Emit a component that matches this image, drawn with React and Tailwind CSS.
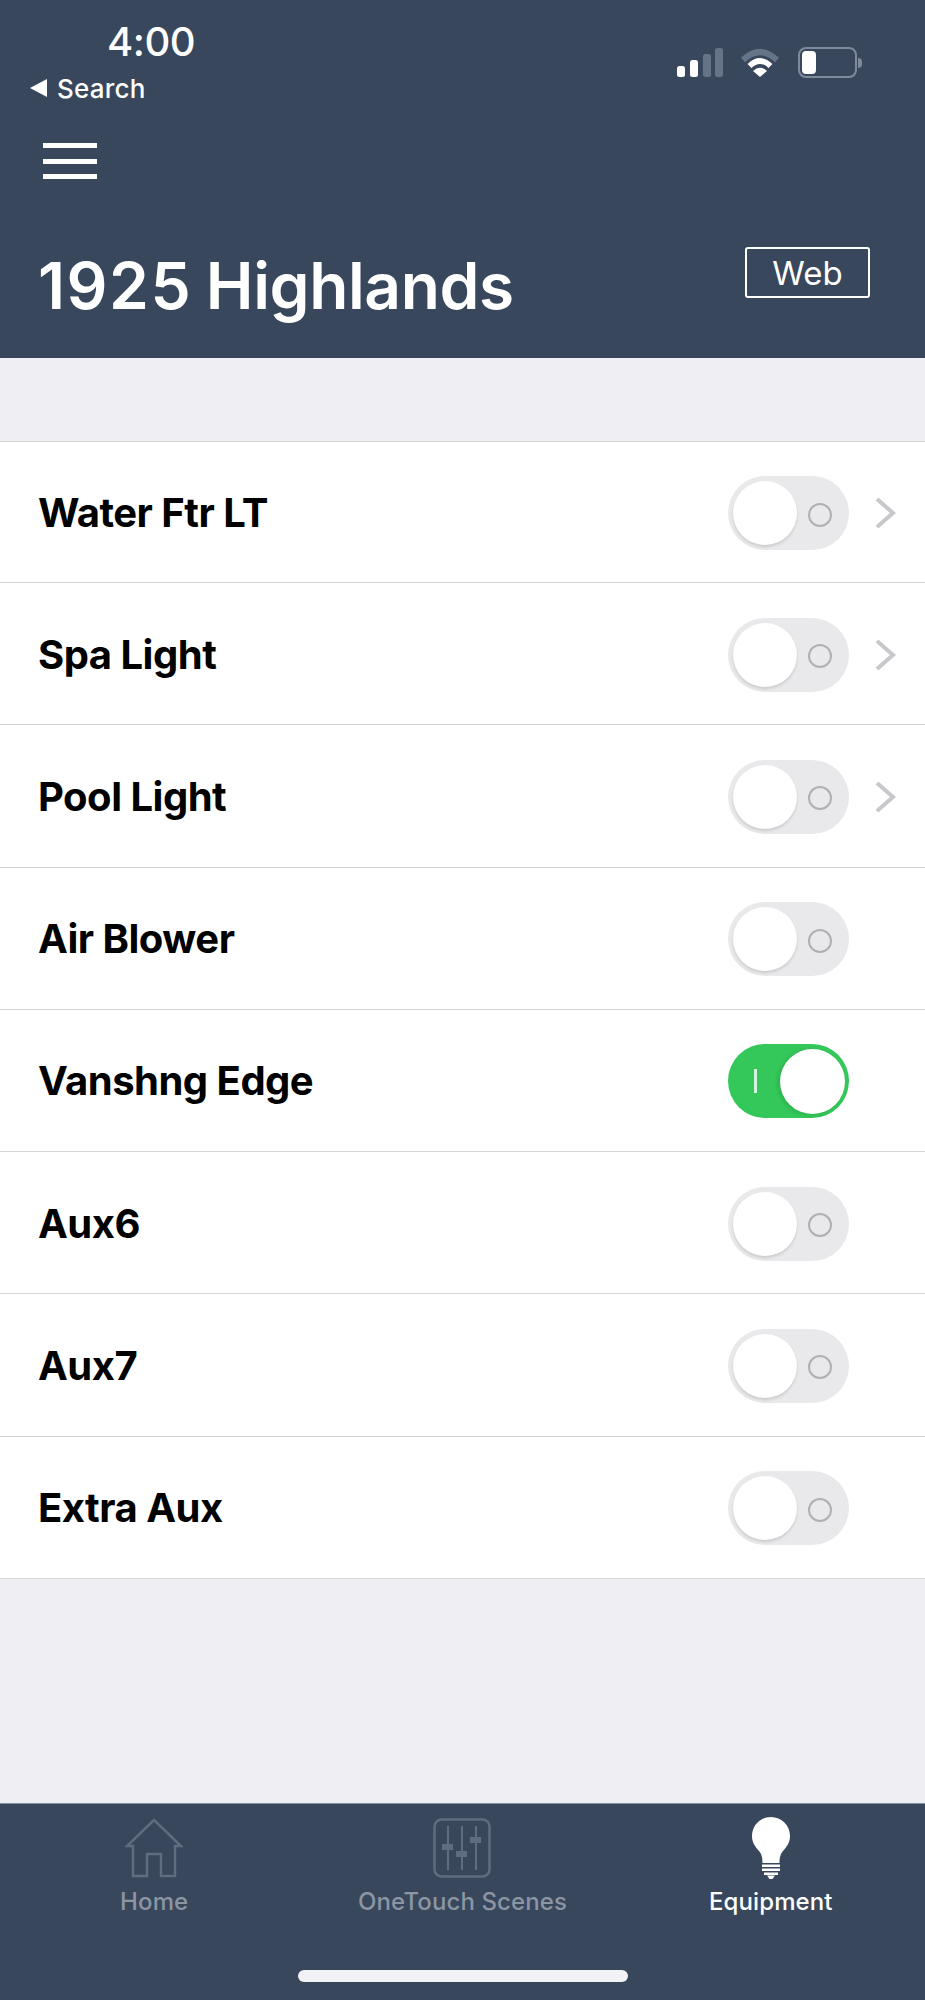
import React from "react";

const rows = [
  { name: "Water Ftr LT", more: true },
  { name: "Spa Light", more: true },
  { name: "Pool Light", more: true },
  { name: "Air Blower" },
  { name: "Vanshng Edge", on: true },
  { name: "Aux6" },
  { name: "Aux7" },
  { name: "Extra Aux" },
];

const font = "font-['Inter',sans-serif]";

const StatusIcons = () => (
  <div className="flex items-center self-start mt-[29px]">
    {/* signal */}
    <svg width="46" height="30" viewBox="0 0 46 30">
      <rect x="0" y="18" width="8" height="11" rx="2.5" fill="#fff" />
      <rect x="13" y="12" width="8" height="17" rx="2.5" fill="#fff" />
      <rect x="26" y="6" width="8" height="23" rx="2.5" fill="#667487" />
      <rect x="38" y="0" width="8" height="29" rx="2.5" fill="#667487" />
    </svg>
    {/* wifi */}
    <svg width="40" height="30" viewBox="0 0 40 30" className="ml-[17px]">
      <path d="M3 12 Q20 -4 37 12" fill="none" stroke="#667487" strokeWidth="6" />
      <path d="M9.5 18 Q20 8 30.5 18" fill="none" stroke="#fff" strokeWidth="5.5" />
      <path d="M20 29 L13 23 Q20 16.5 27 23 Z" fill="#fff" />
    </svg>
    {/* battery */}
    <div className="ml-[18px] flex items-center">
      <div className="w-[59px] h-[31px] rounded-[8px] border-[2.5px] border-[#7f8b9b] p-[2px]">
        <div className="w-[14px] h-full rounded-[4px] bg-white" />
      </div>
      <div className="ml-[1px] w-[4px] h-[10px] rounded-r-full bg-[#7f8b9b]" />
    </div>
  </div>
);

const Toggle = ({ on }) =>
  on ? (
    <div className="w-[121px] h-[74px] rounded-full bg-[#34c759] flex items-center justify-between pl-[26px] pr-[4px]">
      <div className="w-[2.5px] h-[24px] bg-[#d5f2dc]" />
      <div className="w-[65px] h-[65px] rounded-full bg-white shadow-[-2px_1px_4px_rgba(0,0,0,0.12)]" />
    </div>
  ) : (
    <div className="w-[121px] h-[74px] rounded-full bg-[#e9e9eb] flex items-center justify-between pl-[5px] pr-[17px]">
      <div className="w-[64px] h-[64px] rounded-full bg-white shadow-[0_2px_3px_rgba(0,0,0,0.13)]" />
      <div className="mt-[3px] w-[24px] h-[24px] rounded-full border-[2.5px] border-[#b0b0b2]" />
    </div>
  );

const Chevron = () => (
  <svg width="22" height="34" viewBox="0 0 22 34" className="ml-[25px]">
    <path d="M3 3 L19 17 L3 31" fill="none" stroke="#c8c8cc" strokeWidth="4" />
  </svg>
);

const HomeIcon = () => (
  <svg width="58" height="60" viewBox="0 0 58 60" fill="none" stroke="#5f6d80" strokeWidth="2.5">
    <path d="M29 2 L56 28 L50 28 L50 58 L36 58 L36 36 L22 36 L22 58 L8 58 L8 28 L2 28 Z" />
  </svg>
);

const SlidersIcon = () => (
  <svg width="58" height="60" viewBox="0 0 58 60" fill="none" stroke="#5f6d80" strokeWidth="2.5">
    <rect x="1.5" y="1.5" width="55" height="57" rx="7" />
    <path d="M15 8 V52 M29 8 V52 M43 8 V52" strokeWidth="2" />
    <rect x="9" y="26" width="11" height="6" fill="#5f6d80" stroke="none" />
    <rect x="23" y="33" width="11" height="6" fill="#5f6d80" stroke="none" />
    <rect x="37" y="19" width="11" height="6" fill="#5f6d80" stroke="none" />
  </svg>
);

const BulbIcon = () => (
  <svg width="38" height="62" viewBox="0 0 38 62" fill="#fff">
    <path d="M19 0 C8.5 0 0 8.5 0 19 C0 26 3.5 30 7 34 C9.5 37 10.5 40 10.5 46 L27.5 46 C27.5 40 28.5 37 31 34 C34.5 30 38 26 38 19 C38 8.5 29.500 0 19 0 Z" />
    <rect x="10" y="47.500" width="18" height="2.500" />
    <rect x="10" y="51.500" width="18" height="2.500" />
    <rect x="12" y="55.500" width="14" height="2.500" />
    <path d="M15 58.500 H23 L20.500 62 H17.500 Z" />
  </svg>
);

const tabs = [
  { label: "Home", icon: <HomeIcon />, color: "text-[#8b95a3]" },
  { label: "OneTouch Scenes", icon: <SlidersIcon />, color: "text-[#8b95a3]" },
  { label: "Equipment", icon: <BulbIcon />, color: "text-white" },
];

export default function App() {
  return (
    <div className={`h-[2000px] flex flex-col bg-[#eeeef3] ${font}`}>
      {/* header */}
      <div className="h-[358px] shrink-0 bg-[#38475c] text-white pl-[30px]">
        <div className="flex justify-between pr-[63px] pt-[18px]">
          <div>
            <p className="ml-[77px] text-[40px] leading-[48px] font-medium tracking-[-0.5px]">4:00</p>
            <div className="flex items-center mt-[8px] h-[28px]">
              <svg width="18" height="18" viewBox="0 0 18 18">
                <path d="M17 0 V18 L0 9 Z" fill="#fff" />
              </svg>
              <span className="ml-[9px] text-[26px] font-medium tracking-[0.2px]">Search</span>
            </div>
          </div>
          <StatusIcons />
        </div>

        <div className="mt-[41px] ml-[13px] w-[54px] flex flex-col gap-[10.500px]">
          <div className="h-[5px] bg-white" />
          <div className="h-[5px] bg-white" />
          <div className="h-[5px] bg-white" />
        </div>

        <div className="mt-[68px] flex justify-between items-start pl-[8px] pr-[55px]">
          <h1 className="mt-[1px] text-[64px] leading-[76px] font-semibold tracking-[-0.4px] [word-spacing:-2px]">
            <span className="tracking-[1.5px]">1925</span> Highlands
          </h1>
          <button className="w-[125px] h-[51px] pt-[2px] border-[2.5px] border-white rounded-[3px] text-[33px] leading-none">
            Web
          </button>
        </div>
      </div>

      {/* equipment list */}
      <div className="mt-[83px] bg-white border-t border-[#d6d6d8]">
        {rows.map((row) => (
          <div key={row.name} className="h-[142.250px] first:h-[141px] pt-[2px] border-b border-[#d6d6d8] flex items-center pl-[38px]">
            <span className="flex-1 text-[40px] font-bold text-black tracking-[-0.5px]">{row.name}</span>
            <Toggle on={row.on} />
            <div className="w-[76px]">{row.more && <Chevron />}</div>
          </div>
        ))}
      </div>

      {/* tab bar */}
      <div className="mt-auto h-[197px] bg-[#38475c] border-t border-[#8090a8]">
        <div className="grid grid-cols-3 pt-[13px]">
          {tabs.map((tab) => (
            <div key={tab.label} className="flex flex-col items-center">
              <div className="h-[62px] flex items-center">{tab.icon}</div>
              <span className={`mt-[8px] text-[24px] leading-[30px] font-medium tracking-[0.1px] ${tab.color}`}>{tab.label}</span>
            </div>
          ))}
        </div>
        <div className="mt-[53px] mx-auto w-[330px] h-[12px] rounded-full bg-[#f2f2f5]" />
      </div>
    </div>
  );
}
